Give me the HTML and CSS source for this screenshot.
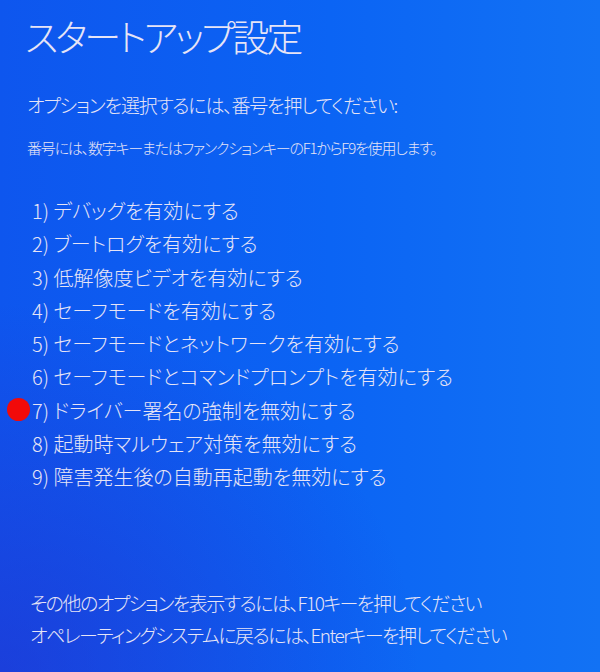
FILE: index.html
```html
<!DOCTYPE html>
<html lang="ja">
<head>
<meta charset="utf-8">
<title>スタートアップ設定</title>
<link rel="stylesheet" href="styles.css">
</head>
<body>
<main class="screen">
  <h1 class="title">スタートアップ設定</h1>
  <p class="prompt">オプションを選択するには、番号を押してください:</p>
  <p class="hint">番号には、数字キーまたはファンクションキーのF1からF9を使用します。</p>
  <ol class="options">
    <li>1) デバッグを有効にする</li>
    <li>2) ブートログを有効にする</li>
    <li>3) 低解像度ビデオを有効にする</li>
    <li>4) セーフモードを有効にする</li>
    <li>5) セーフモードとネットワークを有効にする</li>
    <li>6) セーフモードとコマンドプロンプトを有効にする</li>
    <li class="marked"><span class="dot"></span>7) ドライバー署名の強制を無効にする</li>
    <li>8) 起動時マルウェア対策を無効にする</li>
    <li>9) 障害発生後の自動再起動を無効にする</li>
  </ol>
  <footer class="footer">
    <p>その他のオプションを表示するには、F10キーを押してください</p>
    <p>オペレーティングシステムに戻るには、Enterキーを押してください</p>
  </footer>
</main>
</body>
</html>
```
FILE: styles.css
```css
html, body {
  margin: 0;
  padding: 0;
  height: 100%;
}
body {
  background:
    radial-gradient(ellipse 70% 55% at 0% 100%, rgba(40, 40, 200, 0.5), rgba(40, 40, 200, 0) 100%),
    linear-gradient(to right, #0e56ee 0%, #0b64f4 55%, #1272f4 100%);
  color: #e6e4f6;
  font-family: "Noto Sans CJK JP", "Noto Sans", sans-serif;
  font-feature-settings: "palt";
  font-weight: 400;
}
.screen {
  height: 672px;
  box-sizing: border-box;
  padding: 6px 0 0 27px;
  display: flex;
  flex-direction: column;
}
.title {
  margin: 0 0 0 -2px;
  font-size: 37px;
  font-weight: 300;
  line-height: 60px;
  letter-spacing: -3px;
}
.prompt {
  margin: 25px 0 0 0;
  font-size: 19px;
  line-height: 28px;
  font-weight: 300;
  letter-spacing: -1.2px;
}
.hint {
  margin: 18px 0 0 0;
  font-size: 15px;
  line-height: 22px;
  font-weight: 300;
  letter-spacing: -1.2px;
}
.options {
  list-style: none;
  margin: 35px 0 0 5px;
  padding: 0;
  display: flex;
  flex-direction: column;
}
.options li {
  font-size: 20px;
  line-height: 33.3px;
  font-weight: 300;
  position: relative;
}
.dot {
  position: absolute;
  left: -25px;
  top: 4px;
  width: 23px;
  height: 23px;
  border-radius: 50%;
  background: #f20a0a;
}
.footer {
  margin-top: auto;
  padding: 0 0 21px 3px;
}
.footer p {
  margin: 0;
  font-size: 19px;
  line-height: 32px;
  font-weight: 300;
  letter-spacing: -1.5px;
}
```
